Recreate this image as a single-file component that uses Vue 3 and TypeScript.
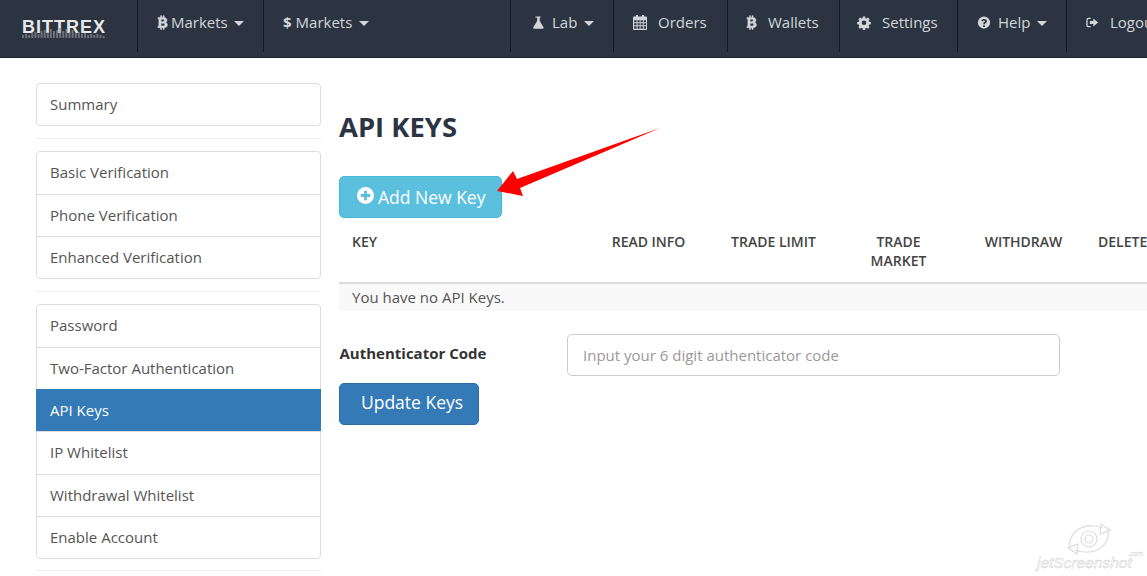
<script setup lang="ts">
const groups: { label: string; active?: boolean }[][] = [
  [{ label: 'Summary' }],
  [{ label: 'Basic Verification' }, { label: 'Phone Verification' }, { label: 'Enhanced Verification' }],
  [
    { label: 'Password' },
    { label: 'Two-Factor Authentication' },
    { label: 'API Keys', active: true },
    { label: 'IP Whitelist' },
    { label: 'Withdrawal Whitelist' },
    { label: 'Enable Account' },
  ],
]
const btc = 'M9.5 1v2H11V1h1.3v2.1c2 .3 3.2 1.3 3.1 3 0 1.2-.7 2-1.7 2.3 1.4.3 2.3 1.3 2.2 2.8-.1 2-1.6 2.9-3.6 3.1V16H11v-1.900H9.500V16H8.200v-1.900H5.500v-1.600h1V4.700h-1V3.100h2.700V1zM9 5v2.600h1.800c1 0 1.700-.4 1.700-1.300S11.800 5 10.800 5zm0 4.400v2.900h2.200c1.100 0 1.800-.5 1.800-1.500s-.7-1.400-1.800-1.400z'
const bars = [3, 4, 3, 5, 6, 4, 7, 8, 6, 9, 7, 8, 10, 7, 9, 6, 8, 5, 6, 4, 5, 3, 4, 3, 4, 3, 2]
</script>

<template>
  <div class="app">
    <header class="nav">
      <div class="brand">
        <span class="logo">BITTREX<svg class="logo-bars" viewBox="0 0 84 10"><rect v-for="(h, i) in bars" :key="i" :x="i * 3.100" :y="10 - h" width="2" :height="h" fill="#8f959b" /></svg></span>
      </div>
      <a class="item w126"><svg class="btc" viewBox="4.500 .5 12 16"><path :d="btc" fill-rule="evenodd" /></svg><span class="t1">Markets</span><i class="caret"></i></a>
      <a class="item w247"><b class="dollar">$</b><span class="t1b">Markets</span><i class="caret"></i></a>
      <a class="item bar w103">
        <svg class="ico" viewBox="0 0 16 16"><path d="M5 1h6v1.300h-1v4l4.300 7.200c.4.800 0 1.500-.9 1.500H3.600c-.9 0-1.300-.7-.9-1.500L7 6.300v-4H5z" /></svg>
        <span class="t2">Lab</span><i class="caret"></i>
      </a>
      <a class="item w114">
        <svg class="cal" viewBox="0 0 16 16"><path fill-rule="evenodd" d="M2 2.500h2V1h2v1.500h4V1h2v1.500h2c.5 0 1 .5 1 1V15c0 .5-.5 1-1 1H2c-.5 0-1-.5-1-1V3.500c0-.5.500-1 1-1zM2.200 6.200v2h2.400v-2zm3.400 0v2h2.100v-2zm3 0v2h2.200v-2zm3.200 0v2H14v-2zM2.200 9.200v2h2.400v-2zm3.400 0v2h2.100v-2zm3 0v2h2.200v-2zm3.200 0v2H14v-2zM2.200 12.200v2.600h2.400v-2.600zm3.400 0v2.600h2.100v-2.600zm3 0v2.600h2.200v-2.600zm3.200 0v2.600H14v-2.600z" /></svg>
        <span class="t3">Orders</span>
      </a>
      <a class="item w112"><svg class="btc" viewBox="4.500 .5 12 16"><path :d="btc" fill-rule="evenodd" /></svg><span class="t3">Wallets</span></a>
      <a class="item w118">
        <svg class="ico" viewBox="0 0 16 16"><path fill-rule="evenodd" d="M6.700 1h2.600l.4 2 1.100.5 1.800-1.100 1.800 1.800-1.100 1.800.5 1.100 2 .4v2.600l-2 .4-.5 1.100 1.100 1.800-1.800 1.800-1.800-1.100-1.100.5-.4 2H6.700l-.4-2-1.100-.5-1.800 1.100-1.800-1.800 1.100-1.800-.5-1.100-2-.4V7.500l2-.4.5-1.100-1.100-1.800 1.800-1.800 1.800 1.100 1.100-.5zM8 5.700a2.600 2.600 0 1 0 0 5.200 2.600 2.600 0 0 0 0-5.200z" /></svg>
        <span class="t3">Settings</span>
      </a>
      <a class="item w109">
        <svg class="ico" viewBox="0 0 16 16"><path fill-rule="evenodd" d="M8 1a7 7 0 1 1 0 14A7 7 0 0 1 8 1zM7 11v2h2v-2zM5 6.200l1.500.7c.2-.7.700-1.100 1.400-1.100.7 0 1.200.3 1.200.9 0 1-2.100 1.200-2.100 3.100v.3h2c0-1.400 2.300-1.600 2.300-3.500 0-1.500-1.400-2.500-3.200-2.500-1.500 0-2.600.7-3.100 2.100z" /></svg>
        <span class="t2">Help</span><i class="caret"></i>
      </a>
      <a class="item w100">
        <svg class="ico" viewBox="0 0 16 16"><path d="M6.500 2.500H4A2.500 2.500 0 0 0 1.500 5v6A2.500 2.500 0 0 0 4 13.500h2.500V12H4a1 1 0 0 1-1-1V5a1 1 0 0 1 1-1h2.500zM9.500 3.500v2.800h-4v3.400h4v2.800L15 8z" /></svg>
        <span class="t3">Logout</span>
      </a>
    </header>

    <div class="page">
      <aside class="side">
        <template v-for="(g, i) in groups" :key="i">
          <ul class="group">
            <li v-for="r in g" :key="r.label" :class="['row', { active: r.active }]">{{ r.label }}</li>
          </ul>
          <hr class="rule" />
        </template>
      </aside>

      <main class="main">
        <h1 class="title">API KEYS</h1>
        <button class="btn info">
          <svg class="plus" viewBox="0 0 16 16"><path fill-rule="evenodd" d="M8 0a8 8 0 1 1 0 16A8 8 0 0 1 8 0zM6.700 3.500v3.200H3.500v2.600h3.200v3.200h2.600V9.300h3.200V6.700H9.300V3.500z" /></svg>
          Add New Key
        </button>
        <div class="table">
          <div class="thead">
            <span class="c-key">KEY</span>
            <span>READ INFO</span>
            <span>TRADE LIMIT</span>
            <span>TRADE MARKET</span>
            <span>WITHDRAW</span>
            <span class="c-del">DELETE</span>
          </div>
          <div class="empty">You have no API Keys.</div>
        </div>
        <form class="auth" @submit.prevent>
          <label class="auth-label" for="code">Authenticator Code</label>
          <input id="code" class="auth-input" placeholder="Input your 6 digit authenticator code" />
        </form>
        <button class="btn primary">Update Keys</button>
      </main>
    </div>

    <svg class="arrow" viewBox="0 0 1147 576"><polygon points="660,128 520,188 523,196 497,191 513,171 517,179" fill="#fe0000" /></svg>

    <div class="mark">
      <svg class="mark-ico" viewBox="0 0 48 32" fill="none" stroke="#dcdcdc" stroke-width="1.200">
        <circle cx="24" cy="16" r="4" />
        <circle cx="24" cy="16" r="8" />
        <path d="M5 24 C3 12 14 2 28 3 C33 3 38 5 38 5 M43 8 C45 20 34 30 20 29 C15 29 10 27 10 27" />
        <path d="M36 1 l9 6 l-10 4 z M12 31 l-9 -6 l10 -4 z" />
      </svg>
      <span class="mark-text">jetScreenshot<small class="mark-com">.com</small></span>
    </div>
  </div>
</template>

<style>
html, body { margin: 0; overflow: hidden; background: #fff; }
</style>

<style scoped>
.app {
  position: relative;
  width: 1147px;
  height: 576px;
  overflow: hidden;
  font-family: "Open Sans", sans-serif;
  color: #555;
}
.nav {
  display: flex;
  height: 57px;
  background: #2b3440;
  border-bottom: 1px solid #1d242c;
  width: 1300px;
}
.brand { width: 137px; display: flex; align-items: center; padding: 0 0 5px 22px; box-sizing: border-box; }
.logo {
  position: relative;
  font-family: "Liberation Sans", sans-serif;
  font-weight: 700;
  font-size: 18px;
  letter-spacing: 1px;
  color: #e8e8e8;
  line-height: 18px;
  margin-top: 2px;
}
.logo-bars { position: absolute; left: 0; top: 10px; width: 84px; height: 10px; opacity: .65; }
.item {
  display: flex;
  align-items: center;
  box-sizing: border-box;
  height: 52px;
  padding: 0 0 8px 19px;
  border-left: 1px solid #141a20;
  color: #d2d6da;
  font-size: 15px;
}
.w126 { width: 126px; }
.w247 { width: 247px; }
.w103 { width: 103px; padding-left: 20px; }
.w114 { width: 114px; padding-left: 18px; }
.w112 { width: 112px; padding-left: 18px; }
.w118 { width: 118px; padding-left: 17px; }
.w109 { width: 109px; padding-left: 19px; }
.w100 { width: 100px; padding-left: 18px; }
.ico { width: 14px; height: 15px; fill: #d2d6da; flex: none; }
.btc { width: 11px; height: 15px; fill: #d2d6da; stroke: #d2d6da; stroke-width: .5; flex: none; }
.cal { width: 16px; height: 16px; fill: #d2d6da; flex: none; }
.t1 { margin-left: 3px; }
.t1b { margin-left: 1px; }
.t2 { margin-left: 7px; }
.t3 { margin-left: 11px; }
.cal + .t3 { margin-left: 10px; }
.dollar { font-size: 15px; font-weight: 700; color: #d2d6da; margin-right: 3px; }
.caret {
  width: 0;
  height: 0;
  margin-left: 7px;
  margin-top: 2px;
  border-left: 5px solid transparent;
  border-right: 5px solid transparent;
  border-top: 5px solid #d2d6da;
}
.t1 + .caret { margin-left: 6px; }
.page {
  display: grid;
  grid-template-columns: 285px 1fr;
  column-gap: 18px;
  padding: 25px 0 0 36px;
}
.side { min-width: 0; }
.group { list-style: none; margin: 0; padding: 0; }
.row {
  box-sizing: border-box;
  padding: 10px 13px;
  height: 43.4px;
  margin-bottom: -1px;
  background: #fff;
  border: 1px solid #ddd;
  font-size: 15px;
  line-height: 21.400px;
  color: #555;
}
.row:first-child { border-radius: 4px 4px 0 0; }
.row:last-child { border-radius: 0 0 4px 4px; margin-bottom: 0; height: 43px; }
.group .row:only-child { border-radius: 4px; }
.row.active { background: #337ab7; border-color: #337ab7; color: #fff; }
.rule { border: 0; border-top: 1px solid #eee; margin: 12px 0 12.400px; }
.rule:nth-of-type(2) { margin-bottom: 12.100px; }
.rule:nth-of-type(3) { margin-top: 11px; margin-bottom: 0; }
.main { width: 900px; min-width: 0; }
.title {
  margin: 25px 0 0;
  font-size: 27.400px;
  line-height: 38px;
  font-weight: 700;
  color: #2b3440;
}
.btn {
  display: flex;
  align-items: center;
  box-sizing: border-box;
  height: 42px;
  border-radius: 5px;
  font-family: inherit;
  font-size: 17.500px;
  color: #fff;
  cursor: pointer;
}
.info {
  margin-top: 30px;
  width: 163px;
  padding: 0 0 0 17px;
  background: #5bc0de;
  border: 1px solid #46b8da;
}
.plus { width: 17px; height: 17px; fill: #fff; margin-right: 4px; margin-top: -3px; flex: none; }
.primary {
  width: 140px;
  justify-content: center;
  margin-top: 7px;
  padding: 0 0 4px 6px;
  background: #337ab7;
  border: 1px solid #2e6da4;
}
.table { margin-top: 10px; }
.thead {
  display: grid;
  grid-template-columns: 247px repeat(4, 125px) 120px;
  height: 45px;
  padding: 4px 0 5px;
  box-sizing: content-box;
  border-bottom: 2px solid #ddd;
  font-size: 14px;
  font-weight: 600;
  line-height: 19px;
  color: #444;
  text-align: center;
}
.thead span { padding: 0 16px; }
.thead .c-key { text-align: left; padding: 0 13px; }
.thead .c-del { text-align: left; padding: 0 12px; }
.empty {
  height: 27px;
  line-height: 27px;
  padding-left: 13px;
  background: #f9f9f9;
  font-size: 15px;
  color: #555;
}
.auth {
  display: flex;
  align-items: center;
  margin-top: 23px;
}
.auth-label { width: 228px; font-size: 15px; font-weight: 700; color: #333; margin-top: -5px; padding-left: 0.5px; box-sizing: border-box; }
.auth-input {
  box-sizing: border-box;
  width: 493px;
  height: 42px;
  padding: 0 15px;
  border: 1px solid #ccc;
  border-radius: 5px;
  font-family: inherit;
  font-size: 15px;
  background: #fff;
  color: #555;
}
.auth-input::placeholder { color: #999; opacity: 1; }
.arrow { position: absolute; left: 0; top: 0; width: 1147px; height: 576px; pointer-events: none; }
.mark { position: absolute; left: 1037px; top: 523px; width: 106px; }
.mark-ico { display: block; width: 48px; height: 32px; margin: 0 0 0 28px; }
.mark-text {
  position: relative;
  display: block;
  font-family: "Liberation Sans", sans-serif;
  font-style: italic;
  font-size: 15.500px;
  line-height: 16px;
  color: #fff;
  -webkit-text-stroke: .5px #d2d2d2;
  white-space: nowrap;
}
.mark-com {
  position: absolute;
  right: 0;
  top: -5px;
  font-size: 7px;
  line-height: 7px;
  -webkit-text-stroke: .3px #d2d2d2;
}
</style>
